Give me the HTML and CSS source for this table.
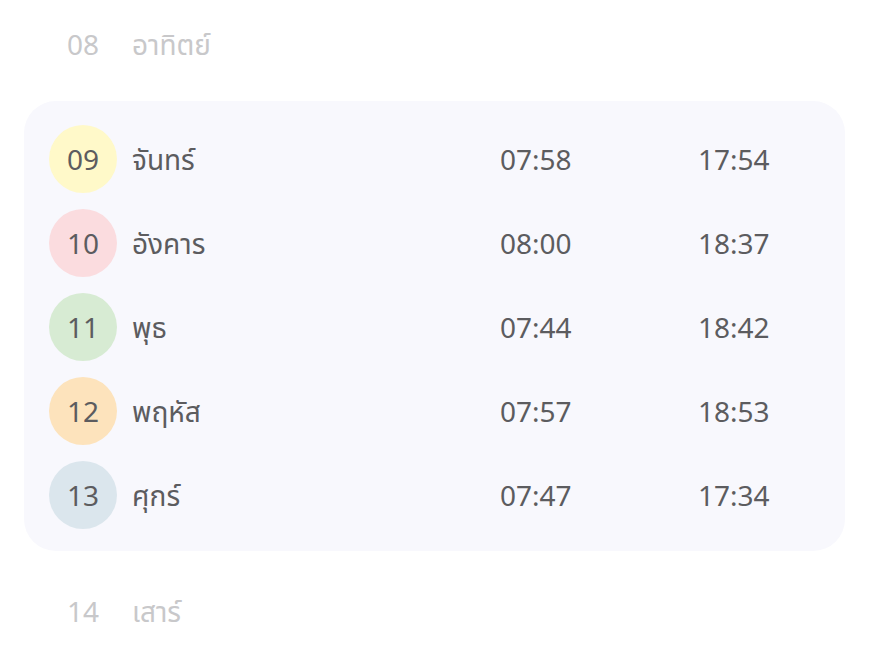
FILE: index.html
```html
<!DOCTYPE html>
<html lang="th">
<head>
<meta charset="utf-8">
<link rel="stylesheet" href="styles.css">
</head>
<body>
<div class="page">
  <div class="row faded top">
    <div class="num">08</div>
    <div class="name">อาทิตย์</div>
    <div class="time"></div>
    <div class="time"></div>
  </div>
  <div class="card">
    <div class="row">
      <div class="num yellow">09</div>
      <div class="name">จันทร์</div>
      <div class="time">07:58</div>
      <div class="time">17:54</div>
    </div>
    <div class="row">
      <div class="num pink">10</div>
      <div class="name">อังคาร</div>
      <div class="time">08:00</div>
      <div class="time">18:37</div>
    </div>
    <div class="row">
      <div class="num green">11</div>
      <div class="name">พุธ</div>
      <div class="time">07:44</div>
      <div class="time">18:42</div>
    </div>
    <div class="row">
      <div class="num orange">12</div>
      <div class="name">พฤหัส</div>
      <div class="time">07:57</div>
      <div class="time">18:53</div>
    </div>
    <div class="row">
      <div class="num blue">13</div>
      <div class="name">ศุกร์</div>
      <div class="time">07:47</div>
      <div class="time">17:34</div>
    </div>
  </div>
  <div class="row faded bottom">
    <div class="num">14</div>
    <div class="name">เสาร์</div>
    <div class="time"></div>
    <div class="time"></div>
  </div>
</div>
</body>
</html>
```
FILE: styles.css
```css
html, body {
  margin: 0;
  padding: 0;
  background: #ffffff;
}
body {
  font-family: "Noto Sans", "Noto Sans Thai", "DejaVu Sans", sans-serif;
  font-size: 28px;
  color: #5c5c5f;
}
.page {
  width: 869px;
  height: 657px;
  overflow: hidden;
}
.row {
  display: grid;
  grid-template-columns: 68px 353px 183px auto;
  column-gap: 15px;
  align-items: center;
  height: 68px;
}
.num {
  width: 68px;
  height: 68px;
  border-radius: 50%;
  display: flex;
  align-items: center;
  justify-content: center;
  line-height: 1;
}
.name, .time {
  line-height: 1;
}
.faded {
  color: #c8c8ca;
  padding-left: 49px;
}
.top {
  margin-top: 10px;
}
.card {
  margin: 23px 24px 0 24px;
  background: #f8f8fd;
  border-radius: 32px;
  padding: 24px 25px 22px 25px;
  display: flex;
  flex-direction: column;
  gap: 16px;
}
.bottom {
  margin-top: 26px;
}
.yellow { background: #fff9c9; }
.pink { background: #fbdcdf; }
.green { background: #d7ebd3; }
.orange { background: #fde3bc; }
.blue { background: #dbe6ed; }
```
